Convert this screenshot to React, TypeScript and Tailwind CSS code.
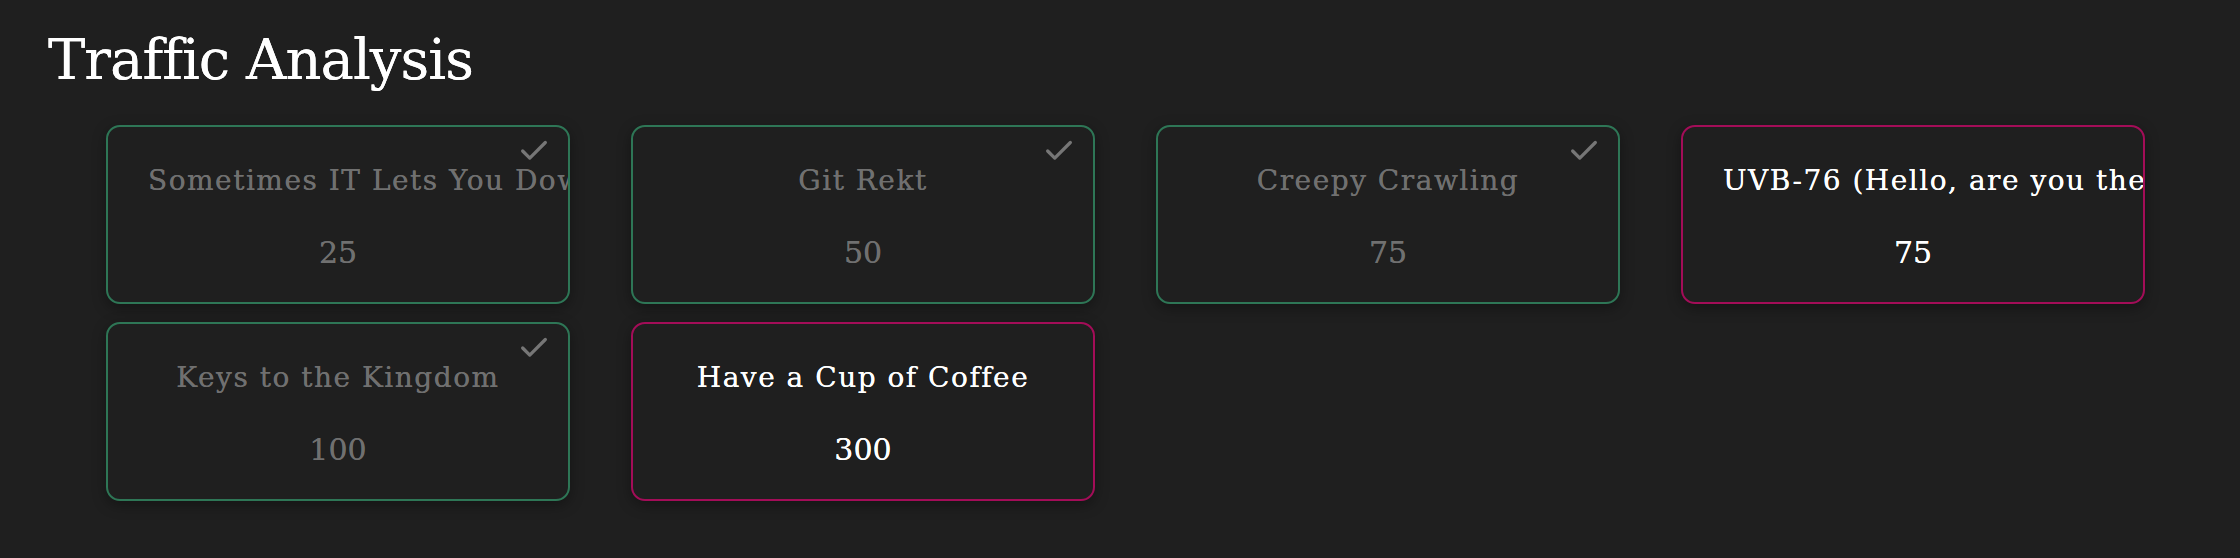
import { Check } from 'lucide-react';
import clsx from 'clsx';

const challenges = [
  { id: 1, name: 'Sometimes IT Lets You Down', points: 25, solved: true },
  { id: 2, name: 'Git Rekt', points: 50, solved: true },
  { id: 3, name: 'Creepy Crawling', points: 75, solved: true },
  { id: 4, name: 'UVB-76 (Hello, are you there?)', points: 75, solved: false },
  { id: 5, name: 'Keys to the Kingdom', points: 100, solved: true },
  { id: 6, name: 'Have a Cup of Coffee', points: 300, solved: false },
];

export default function App() {
  return (
    <div className="min-h-[558px] bg-[#1f1f1f] pl-[48px] pt-[22px] font-['DejaVu_Serif',serif]">
      <h1 className="text-[56px] leading-[76px] text-white tracking-[-1px] [text-shadow:0_0_0.6px_currentColor]">Traffic Analysis</h1>

      <div className="ml-[58px] mt-[27px] grid grid-cols-[repeat(4,464px)] gap-x-[61px] gap-y-[18px]">
        {challenges.map((c) => (
          <div
            key={c.id}
            className={clsx(
              'relative h-[179px] overflow-hidden rounded-[14px] border-2 bg-[#1f1f1f] shadow-[0_4px_14px_rgba(0,0,0,0.35)] flex flex-col items-center justify-center gap-[42px] px-[40px] pt-[4px]',
              c.solved ? 'border-[#2e7656] text-[#707070]' : 'border-[#a30d58] text-white'
            )}
          >
            {c.solved && (
              <Check className="absolute right-[17px] top-[7px] h-[34px] w-[34px] text-[#767676]" strokeWidth={2.3} />
            )}
            <p className="w-full whitespace-nowrap text-center text-[28px] leading-[30px] tracking-[1.5px] [text-shadow:0_0_0.6px_currentColor]">{c.name}</p>
            <p className="text-[30px] leading-[30px] [text-shadow:0_0_0.6px_currentColor]">{c.points}</p>
          </div>
        ))}
      </div>
    </div>
  );
}
